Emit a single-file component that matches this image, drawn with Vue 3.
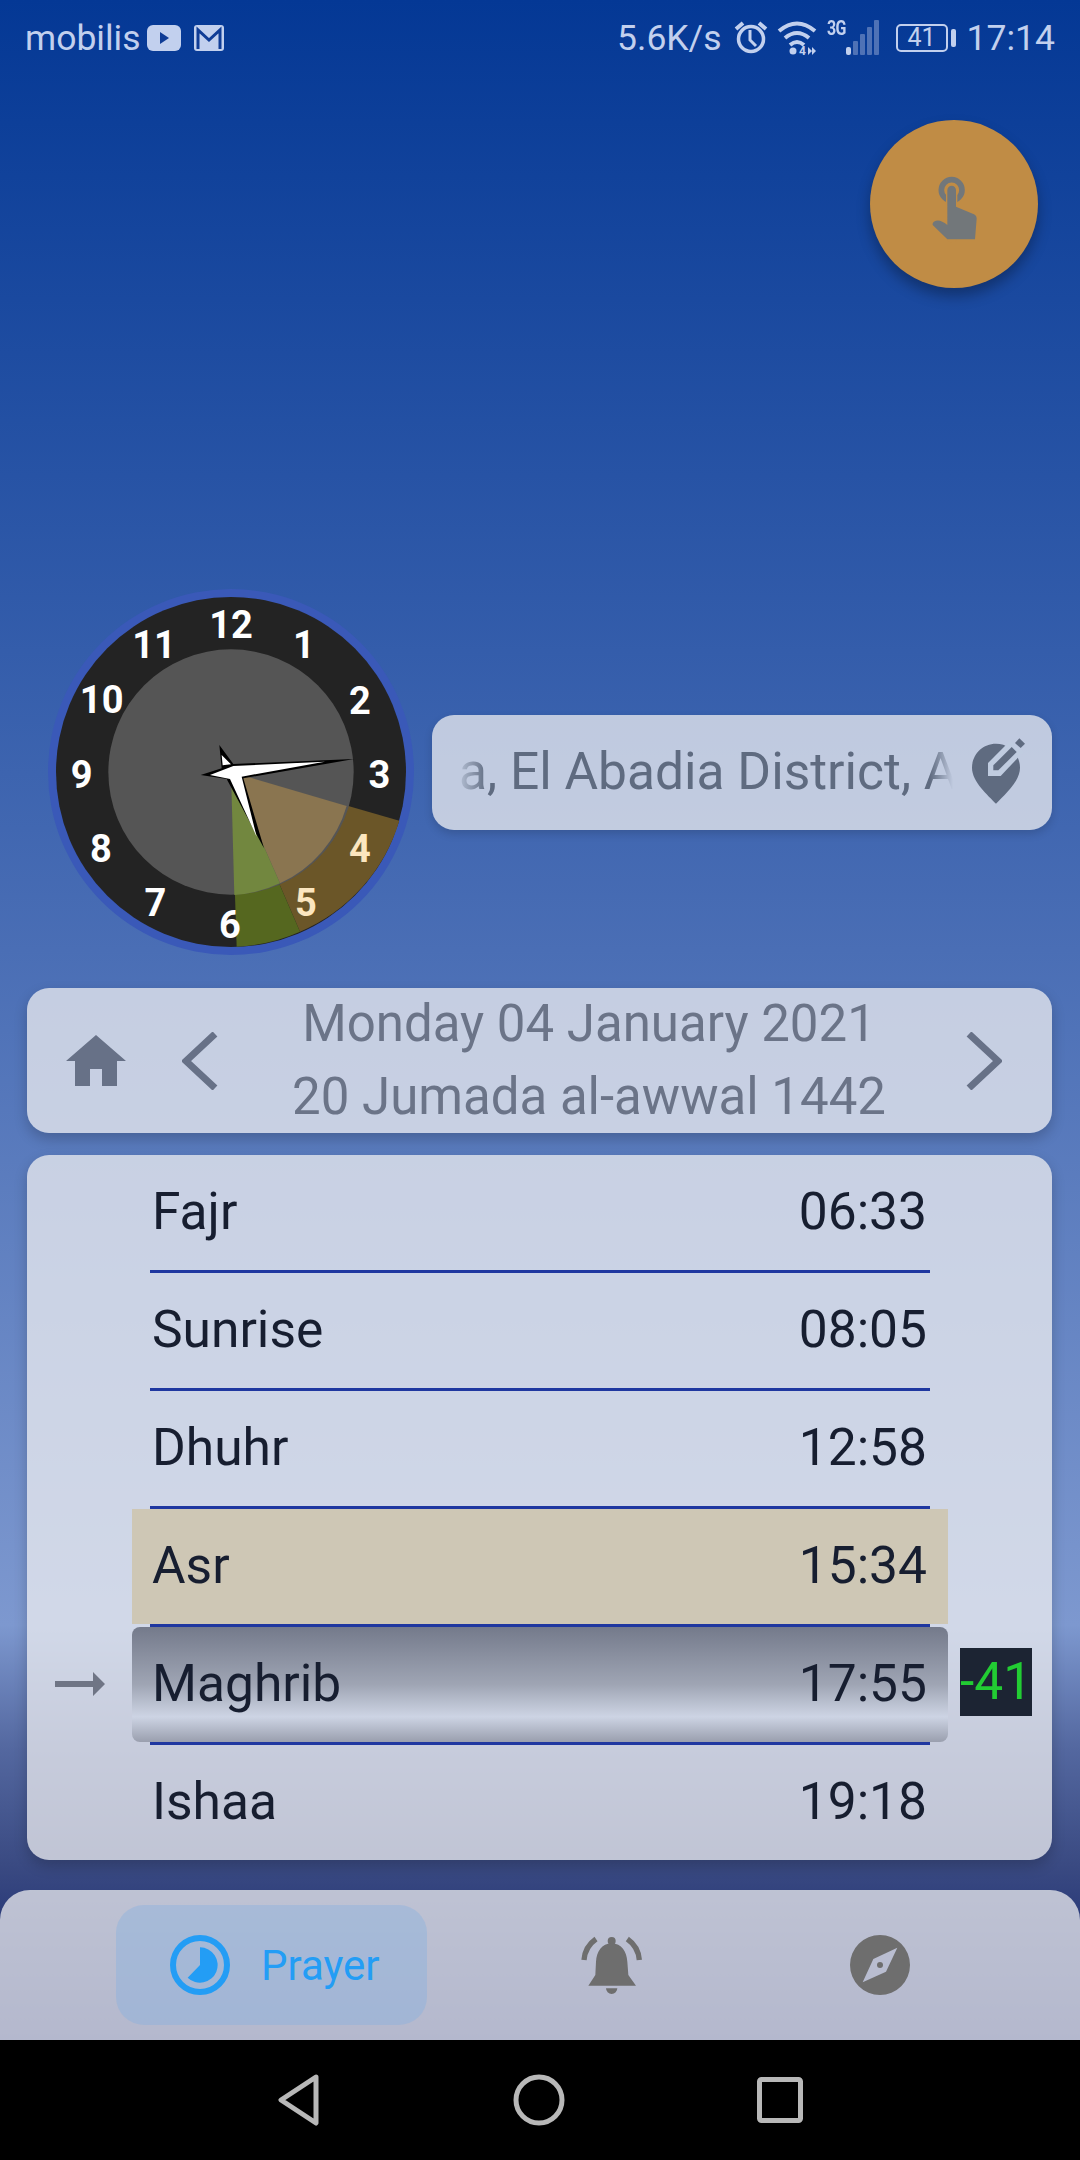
<template>
  <div class="page">
    <div class="status">
      <div class="status-left">
        <span>mobilis</span>
        <svg class="s-yt" width="34" height="26" viewBox="0 0 34 26"><rect width="34" height="26" rx="6" fill="#c2d0ee"/><path d="M13 7l9 6-9 6z" fill="#0f3c96"/></svg>
        <svg class="s-gm" width="30" height="26" viewBox="0 0 30 26"><rect width="30" height="26" rx="3" fill="#c2d0ee"/><path d="M4 24V5l11 10L26 5v19" fill="none" stroke="#0f3c96" stroke-width="3"/></svg>
      </div>
      <div class="status-right">
        <span class="speed">5.6K/s</span>
        <svg class="s-alarm" width="36" height="36" viewBox="0 0 36 36" fill="none" stroke="#c2d0ee"><circle cx="18" cy="19" r="12.500" stroke-width="3.500"/><path d="M17 10v10l6 6" stroke-width="3"/><path d="M3 9l7-6M33 9l-7-6" stroke-width="4"/></svg>
        <svg class="s-wifi" width="40" height="38" viewBox="0 0 40 38" fill="none" stroke="#c2d0ee" stroke-width="4"><path d="M2 11Q20-4 38 11M8 18Q20 8 32 18M13 25Q20 19 27 25"/><circle cx="16" cy="31" r="3.500" fill="#c2d0ee" stroke="none"/><text class="s-4g" x="22" y="35">4</text><path d="M31 35V27l4 4zM35 27v8l4-4z" fill="#c2d0ee" stroke="none"/></svg>
        <div class="signal">
          <span class="g3">3G</span>
          <svg width="33" height="35" viewBox="0 0 33 35"><rect x="0" y="27" width="5" height="8" rx="2" fill="#c2d0ee"/><g fill="#4f72b6"><rect x="7" y="21" width="5" height="14" rx="1"/><rect x="14" y="14" width="5" height="21" rx="1"/><rect x="21" y="7" width="5" height="28" rx="1"/><rect x="28" y="0" width="5" height="35" rx="1"/></g></svg>
        </div>
        <div class="battery"><span>41</span></div>
        <span class="clock-text">17:14</span>
      </div>
    </div>

    <button class="fab">
      <svg width="90" height="100" viewBox="0 0 270 300">
        <circle cx="125" cy="90" r="31" fill="none" stroke="#72777a" stroke-width="17"/>
        <path d="M125 90V230" stroke="#c08c45" stroke-width="34" stroke-linecap="round"/>
        <path d="M112 90a13 13 0 0 1 26 0V140L190 162q10 4 10 14L195 238H112L68 195Q66 186 78 182 92 178 112 195z" fill="#72777a"/>
      </svg>
    </button>

    <div class="hero">
      <svg class="dial" width="380" height="380" viewBox="33 6 1140 1140">
        <circle cx="603" cy="576" r="549" fill="#3a59b8"/>
        <circle cx="603" cy="576" r="525" fill="#232323"/>
        <path d="M603 576L1108 722A525 525 0 0 1 810 1055z" fill="#6b5628"/>
        <path d="M603 576L810 1055A525 525 0 0 1 620 1100z" fill="#55671f"/>
        <circle cx="603" cy="576" r="368" fill="#555"/>
        <path d="M603 576L950 678A368 368 0 0 1 750 910z" fill="#8a7550"/>
        <path d="M603 576L750 910A368 368 0 0 1 613 945z" fill="#72873f"/>
        <g class="num">
          <text v-for="n in numbers" :key="n.t" :x="n.x" :y="n.y" :fill="n.c">{{ n.t }}</text>
        </g>
        <path d="M568 495L610 552 972 537 640 595 702 805 590 597 512 585 575 565z" fill="#000"/>
        <path d="M575 525L603 553 578 556zM540 585L610 558 885 545 635 590 680 770 600 597z" fill="#fff"/>
      </svg>
      <div class="location">
        <div class="address"><span>a, El Abadia District, Ai</span></div>
        <svg class="pin" width="80" height="90" viewBox="0 0 240 270">
          <path d="M108 50C65 50 36 85 36 122 36 165 85 205 108 230 131 205 180 165 180 122 180 85 150 50 108 50z" fill="#5f6b80"/>
          <path d="M84 147V108L152 40 190 75 122 147z" fill="#c0cce0"/>
          <path d="M100 130V115L155 60 170 75 115 130z" fill="#5f6b80"/>
          <path d="M165 48L178 34 195 50 182 63z" fill="#5f6b80"/>
        </svg>
      </div>
    </div>

    <div class="date-card">
      <svg class="home" width="60" height="51" viewBox="0 0 60 51"><path d="M30 0L60 26H51V51H36V34H24V51H9V26H0z" fill="#677187"/></svg>
      <svg class="chev" width="36" height="58" viewBox="0 0 36 58"><path d="M33 2L4 29l29 27" fill="none" stroke="#677187" stroke-width="7"/></svg>
      <div class="date-text">
        <div>Monday 04 January 2021</div>
        <div>20 Jumada al-awwal 1442</div>
      </div>
      <svg class="chev" width="36" height="58" viewBox="0 0 36 58"><path d="M3 2l29 27L3 56" fill="none" stroke="#677187" stroke-width="7"/></svg>
    </div>

    <div class="times">
      <template v-for="(p, i) in prayers" :key="p.name">
        <div class="row" :class="p.kind">
          <span>{{ p.name }}</span>
          <span>{{ p.time }}</span>
          <svg v-if="p.kind === 'next'" class="arrow" width="50" height="24" viewBox="0 0 50 24"><path d="M0 9h38V0l12 12-12 12v-9H0z" fill="#6f7585"/></svg>
          <div v-if="p.kind === 'next'" class="count">-41</div>
        </div>
        <div v-if="i < prayers.length - 1" class="line"></div>
      </template>
    </div>

    <div class="tabs">
      <div class="tab-active">
        <svg width="60" height="60" viewBox="60 45 180 180"><circle cx="150" cy="135" r="81" fill="none" stroke="#239df5" stroke-width="18"/><path d="M150 82A53 53 0 1 1 113 173L150 135z" fill="#239df5"/></svg>
        <span>Prayer</span>
      </div>
      <svg class="bell" width="90" height="80" viewBox="0 0 270 240">
        <circle cx="125" cy="48" r="12" fill="#6e6e6e"/>
        <path d="M125 55C95 55 80 80 78 110L76 150 55 182H198L175 150 172 110C170 80 155 55 125 55zM108 190a17 17 0 0 0 34 0z" fill="#6e6e6e"/>
        <path d="M78 42Q45 65 42 105M172 42Q205 65 208 105" fill="none" stroke="#6e6e6e" stroke-width="16"/>
      </svg>
      <svg class="compass" width="60" height="60" viewBox="30 30 180 180">
        <path fill-rule="evenodd" d="M120 30a90 90 0 1 1 0 180 90 90 0 0 1 0-180zM172 68L100 102 68 172 138 140z" fill="#6e6e6e"/>
        <circle cx="120" cy="120" r="9" fill="#6e6e6e"/>
      </svg>
    </div>

    <div class="softkeys">
      <svg width="44" height="52" viewBox="0 0 44 52"><path d="M39 3L4 26l35 23z" fill="none" stroke="#b8b8b8" stroke-width="5" stroke-linejoin="round"/></svg>
      <svg width="52" height="52" viewBox="0 0 52 52"><circle cx="26" cy="26" r="23" fill="none" stroke="#b8b8b8" stroke-width="5"/></svg>
      <svg width="46" height="46" viewBox="0 0 46 46"><rect x="2.500" y="2.500" width="41" height="41" rx="2" fill="none" stroke="#b8b8b8" stroke-width="5"/></svg>
    </div>
  </div>
</template>

<script setup>
const numbers = [
  { t: '12', x: 603, y: 175, c: '#fff' },
  { t: '1', x: 822, y: 235, c: '#fff' },
  { t: '2', x: 990, y: 402, c: '#fff' },
  { t: '3', x: 1048, y: 625, c: '#fff' },
  { t: '4', x: 990, y: 845, c: '#fbe6bf' },
  { t: '5', x: 828, y: 1008, c: '#fbe6bf' },
  { t: '6', x: 600, y: 1073, c: '#fff' },
  { t: '7', x: 376, y: 1008, c: '#fff' },
  { t: '8', x: 213, y: 845, c: '#fff' },
  { t: '9', x: 155, y: 625, c: '#fff' },
  { t: '10', x: 215, y: 398, c: '#fff' },
  { t: '11', x: 372, y: 235, c: '#fff' }
]

const prayers = [
  { name: 'Fajr', time: '06:33' },
  { name: 'Sunrise', time: '08:05' },
  { name: 'Dhuhr', time: '12:58' },
  { name: 'Asr', time: '15:34', kind: 'current' },
  { name: 'Maghrib', time: '17:55', kind: 'next' },
  { name: 'Ishaa', time: '19:18' }
]
</script>

<style>
body {
  margin: 0;
}
</style>

<style scoped>
.page {
  position: relative;
  width: 1080px;
  height: 2160px;
  overflow: hidden;
  display: flex;
  flex-direction: column;
  font-family: Roboto, "Liberation Sans", sans-serif;
  background: linear-gradient(#043895 0, #4a6eb5 950px, #7d98cf 1625px, #5468a0 1747px, #3a4a82 1865px, #0a1a66 2040px);
}
.status {
  height: 75px;
  flex: none;
  display: flex;
  justify-content: space-between;
  align-items: center;
  padding: 0 25px;
  box-sizing: border-box;
  color: #c2d0ee;
  font-size: 35.500px;
}
.status-left,
.status-right {
  display: flex;
  align-items: center;
}
.s-yt {
  margin-left: 6px;
}
.s-gm {
  margin-left: 13px;
}
.s-alarm {
  margin-left: 11px;
}
.s-wifi {
  margin-left: 8px;
  margin-top: 2px;
}
.s-4g {
  font-size: 12px;
  font-weight: 700;
  fill: #c2d0ee;
  stroke: none;
}
.signal {
  position: relative;
  width: 52px;
  height: 35px;
  margin-left: 10px;
  display: flex;
  justify-content: flex-end;
  align-items: flex-end;
}
.g3 {
  position: absolute;
  left: 0;
  top: 0;
  font-size: 20px;
  font-weight: 700;
  line-height: 16px;
  letter-spacing: -1px;
  transform: scaleX(.8);
  transform-origin: left;
}
.battery {
  width: 52px;
  height: 28px;
  margin-left: 17px;
  margin-right: 19px;
  border: 2px solid #c2d0ee;
  border-radius: 5px;
  box-sizing: border-box;
  font-size: 25px;
  display: flex;
  align-items: center;
  justify-content: center;
  position: relative;
}
.battery::after {
  content: "";
  position: absolute;
  right: -10px;
  top: 3px;
  width: 5px;
  height: 18px;
  border-radius: 2px;
  background: #c2d0ee;
}
.fab {
  position: absolute;
  left: 870px;
  top: 120px;
  width: 168px;
  height: 168px;
  padding: 12px 0 0 2px;
  border: 0;
  border-radius: 50%;
  background: #c08c45;
  box-shadow: 0 8px 14px rgba(0, 0, 0, .3);
  display: flex;
  align-items: center;
  justify-content: center;
}
.hero {
  margin-top: 507px;
  padding: 0 28px 0 41px;
  display: flex;
  align-items: center;
  justify-content: space-between;
}
.num text {
  font-size: 114px;
  font-weight: 700;
  text-anchor: middle;
}
.location {
  width: 620px;
  height: 115px;
  box-sizing: border-box;
  padding: 0 12px 0 23px;
  border-radius: 22px;
  background: rgba(238, 238, 240, .75);
  box-shadow: 0 4px 8px rgba(0, 0, 0, .15);
  display: flex;
  align-items: center;
  justify-content: space-between;
  color: #5f6b80;
  font-size: 51.500px;
}
.address {
  width: 498px;
  overflow: hidden;
  white-space: nowrap;
  padding: 0 0 2px 4px;
  box-sizing: border-box;
  -webkit-mask-image: linear-gradient(90deg, transparent, #000 32px, #000 475px, transparent);
  mask-image: linear-gradient(90deg, transparent, #000 32px, #000 475px, transparent);
}
.date-card {
  margin: 26px 28px 0 27px;
  height: 145px;
  padding: 0 50px 0 39px;
  border-radius: 22px;
  background: rgba(238, 238, 240, .75);
  box-shadow: 0 6px 14px rgba(0, 0, 0, .2);
  display: flex;
  align-items: center;
  color: #6b7488;
  font-size: 51px;
}
.chev {
  flex: none;
}
.home {
  flex: none;
  margin-right: 56px;
}
.date-text {
  flex: 1;
  text-align: center;
  line-height: 73px;
  padding: 0 6px 2px 0;
  white-space: nowrap;
}
.times {
  margin: 22px 28px 0 27px;
  height: 705px;
  border-radius: 22px;
  background: rgba(238, 238, 240, .75);
  box-shadow: 0 6px 14px rgba(0, 0, 0, .2);
  color: #171e30;
  font-size: 51.500px;
}
.row {
  position: relative;
  height: 115px;
  margin: 0 104px 0 105px;
  padding: 0 21px 2px 20px;
  box-sizing: border-box;
  display: flex;
  align-items: center;
  justify-content: space-between;
}
.line {
  height: 3px;
  margin: 0 122px 0 123px;
  background: #1f37a0;
}
.current {
  background: #cec7b5;
}
.next {
  border-radius: 8px;
  background: linear-gradient(#747a8b, #9fa5b4 50%, #cdd4e4 78%, #9a9fae);
}
.arrow {
  position: absolute;
  left: -77px;
  top: 45px;
}
.count {
  position: absolute;
  left: 828px;
  top: 21px;
  width: 72px;
  height: 68px;
  background: #1c2433;
  color: #22cc33;
  font-size: 51.500px;
  line-height: 68px;
  text-align: center;
}
.tabs {
  margin-top: 30px;
  height: 150px;
  flex: none;
  position: relative;
  border-radius: 30px 30px 0 0;
  background: rgba(238, 238, 240, .75);
}
.tab-active {
  position: absolute;
  left: 116px;
  top: 15px;
  width: 311px;
  height: 120px;
  box-sizing: border-box;
  padding-left: 54px;
  border-radius: 28px;
  background: rgba(125, 175, 225, .35);
  color: #239df5;
  font-size: 42px;
  display: flex;
  align-items: center;
  gap: 31px;
}
.bell {
  position: absolute;
  left: 570px;
  top: 35px;
}
.compass {
  position: absolute;
  left: 850px;
  top: 45px;
}
.softkeys {
  height: 120px;
  flex: none;
  background: #000;
  display: flex;
  align-items: center;
  justify-content: center;
  gap: 192px;
}
</style>
